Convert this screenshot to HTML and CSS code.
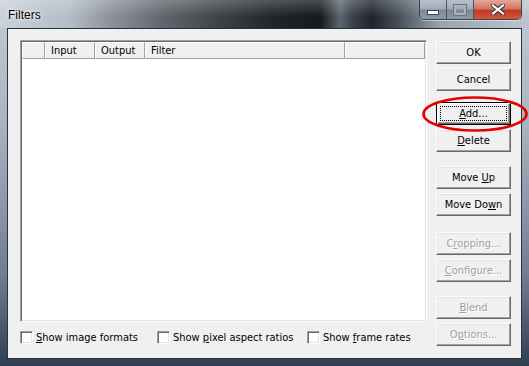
FILE: index.html
```html
<!DOCTYPE html>
<html lang="en">
  <head>
    <meta charset="UTF-8" />
    <title>Filters</title>
    <link rel="stylesheet" href="styles.css">
  </head>
  <body>
    <div class="window">
      <div class="titlebar">
        <span class="title">Filters</span>
        <div class="controls">
          <span class="ctl min"><i></i></span>
          <span class="ctl max"><i></i></span>
          <span class="ctl close">
            <svg width="14" height="11" viewBox="0 0 14 11">
              <path d="M2 1.5 L12 9.5 M12 1.5 L2 9.5" stroke="#2d3540" stroke-width="4.2" stroke-linecap="square" fill="none" />
              <path d="M2 1.5 L12 9.5 M12 1.5 L2 9.5" stroke="#fff" stroke-width="2.2" stroke-linecap="square" fill="none" />
            </svg>
          </span>
        </div>
      </div>
      <div class="client">
        <div class="left">
          <div class="listview">
            <div class="header">
              <span class="col c0"></span>
              <span class="col c1">Input</span>
              <span class="col c2">Output</span>
              <span class="col c3">Filter</span>
              <span class="col c4"></span>
            </div>
          </div>
          <div class="options">
            <label class="check w1"><span class="box"></span><span><u>S</u>how image formats</span></label>
            <label class="check w2"><span class="box"></span><span>Show <u>p</u>ixel aspect ratios</span></label>
            <label class="check"><span class="box"></span><span>Show <u>f</u>rame rates</span></label>
          </div>
        </div>
        <div class="buttons">
          <div class="group">
            <button class="btn">OK</button>
            <button class="btn">Cancel</button>
          </div>
          <div class="group g2">
            <button class="btn focus"><u>A</u>dd...</button>
            <button class="btn"><u>D</u>elete</button>
          </div>
          <div class="group g3">
            <button class="btn">Move <u>U</u>p</button>
            <button class="btn">Move Do<u>w</u>n</button>
          </div>
          <div class="group g4">
            <button class="btn" disabled>C<u>r</u>opping...</button>
            <button class="btn" disabled><u>C</u>onfigure...</button>
          </div>
          <div class="group g5">
            <button class="btn" disabled><u>B</u>lend</button>
            <button class="btn" disabled>O<u>p</u>tions...</button>
          </div>
        </div>
      </div>
      <svg class="mark" width="108" height="38" viewBox="0 0 108 38">
        <ellipse cx="54" cy="19" rx="51.5" ry="16.5" fill="none" stroke="#e60000" stroke-width="2.6" />
      </svg>
    </div>
  </body>
</html>
```

FILE: styles.css
```css
body {
  margin: 0;
  background: #1c2633;
  font-family: "DejaVu Sans Condensed", "Liberation Sans", Arial, sans-serif;
  font-size: 11px;
}
.window {
  position: relative;
  width: 529px;
  height: 366px;
  display: flex;
  flex-direction: column;
  background: linear-gradient(to bottom, #c3ccd6 0, #a7b3c0 35%, #6f7e90 75%, #2e3d50 100%);
  box-sizing: border-box;
}
.titlebar {
  height: 29px;
  display: flex;
  align-items: flex-start;
  padding-left: 8px;
  background:
    linear-gradient(to bottom, rgba(255, 255, 255, 0.22), rgba(255, 255, 255, 0) 60%),
    linear-gradient(to right, #c9d1da 0, #b4bcc5 70px, #8c939b 110px, #62686f 160px,
      #3d4248 220px, #23272c 270px, #15181c 320px, #5d6670 340px, #3b434c 352px,
      #1e242b 372px, #4a525b 400px, #9aa3ad 440px, #bcc5cf 529px);
}
.title {
  margin-top: 8px;
  font-family: "Liberation Sans", Arial, sans-serif;
  font-size: 12px;
  color: #000;
  text-shadow: 0 0 6px #fff, 0 0 3px #fff;
}
.controls {
  margin-left: auto;
  margin-right: 7px;
  display: flex;
  height: 19px;
  border: 1px solid #3a444f;
  border-top: none;
  border-radius: 0 0 5px 5px;
  overflow: hidden;
  box-shadow: 0 1px 0 rgba(255, 255, 255, 0.5);
}
.ctl {
  display: flex;
  align-items: center;
  justify-content: center;
  height: 19px;
  box-sizing: border-box;
}
.min,
.max {
  width: 27px;
  background: linear-gradient(to bottom, #b9c2cc 0, #a2abb6 45%, #7f8995 55%, #8e99a5 100%);
  border-right: 1px solid #4a545f;
}
.min i {
  width: 10px;
  height: 3px;
  margin-top: 5px;
  background: #fff;
  border: 1px solid #3b4550;
}
.max i {
  width: 8px;
  height: 6px;
  border: 2px solid #a9b1ba;
  outline: 1px solid #6a7480;
}
.close {
  width: 47px;
  background: linear-gradient(to bottom, #e6a797 0, #d47562 45%, #c13a22 55%, #d2563a 100%);
}
.client {
  flex: 1;
  margin: 0 7px 7px 7px;
  border: 1px solid #2a333e;
  background: #f0f0f0;
  display: flex;
  gap: 9px;
  padding: 11px 9px 12px 12px;
}
.left {
  width: 407px;
  display: flex;
  flex-direction: column;
  gap: 9px;
}
.listview {
  height: 282px;
  box-sizing: border-box;
  background: #fff;
  border: 1px solid;
  border-color: #a0a0a0 #fff #fff #a0a0a0;
  box-shadow: inset 1px 1px #696969, inset -1px -1px #e3e3e3;
  padding: 1px 1px 1px 1px;
}
.header {
  display: flex;
  height: 17px;
}
.col {
  box-sizing: border-box;
  height: 17px;
  line-height: 15px;
  padding-left: 5px;
  background: #f0f0f0;
  border-left: 1px solid #fff;
  border-top: 1px solid #fff;
  border-right: 1px solid #a0a0a0;
  border-bottom: 1px solid #a0a0a0;
  color: #000;
}
.c0 {
  width: 23px;
}
.c1,
.c2 {
  width: 50px;
}
.c3 {
  width: 200px;
}
.c4 {
  flex: 1;
}
.options {
  display: flex;
  align-items: center;
  height: 13px;
}
.check {
  display: flex;
  align-items: center;
  gap: 3px;
  color: #000;
}
.check.w1 {
  width: 137px;
}
.check.w2 {
  width: 150px;
}
.box {
  width: 13px;
  height: 13px;
  box-sizing: border-box;
  background: #fff;
  border: 1px solid;
  border-color: #a0a0a0 #fff #fff #a0a0a0;
  box-shadow: inset 1px 1px #696969, inset -1px -1px #e3e3e3;
}
.buttons {
  width: 75px;
  display: flex;
  flex-direction: column;
  padding-top: 1px;
}
.group {
  display: flex;
  flex-direction: column;
  gap: 4px;
}
.g2 {
  margin-top: 11px;
}
.g3 {
  margin-top: 14px;
}
.g4 {
  margin-top: 16px;
}
.g5 {
  margin-top: 14px;
}
.btn {
  position: relative;
  height: 23px;
  width: 75px;
  padding: 0;
  font-family: inherit;
  font-size: 11px;
  color: #000;
  background: #f0f0f0;
  border: 1px solid;
  border-color: #fff #696969 #696969 #fff;
  box-shadow: inset -1px -1px #a0a0a0, inset 1px 1px #e3e3e3;
}
.btn.focus {
  border: 1px solid #000;
  box-shadow: inset 1px 1px #fff, inset -1px -1px #696969, inset -2px -2px #a0a0a0;
}
.btn.focus::after {
  content: "";
  position: absolute;
  left: 3px;
  right: 3px;
  top: 3px;
  bottom: 3px;
  border: 1px dotted #000;
}
.btn:disabled {
  color: #a0a0a0;
  text-shadow: 1px 1px 0 #fff;
}
.mark {
  position: absolute;
  left: 421px;
  top: 95px;
}
```
